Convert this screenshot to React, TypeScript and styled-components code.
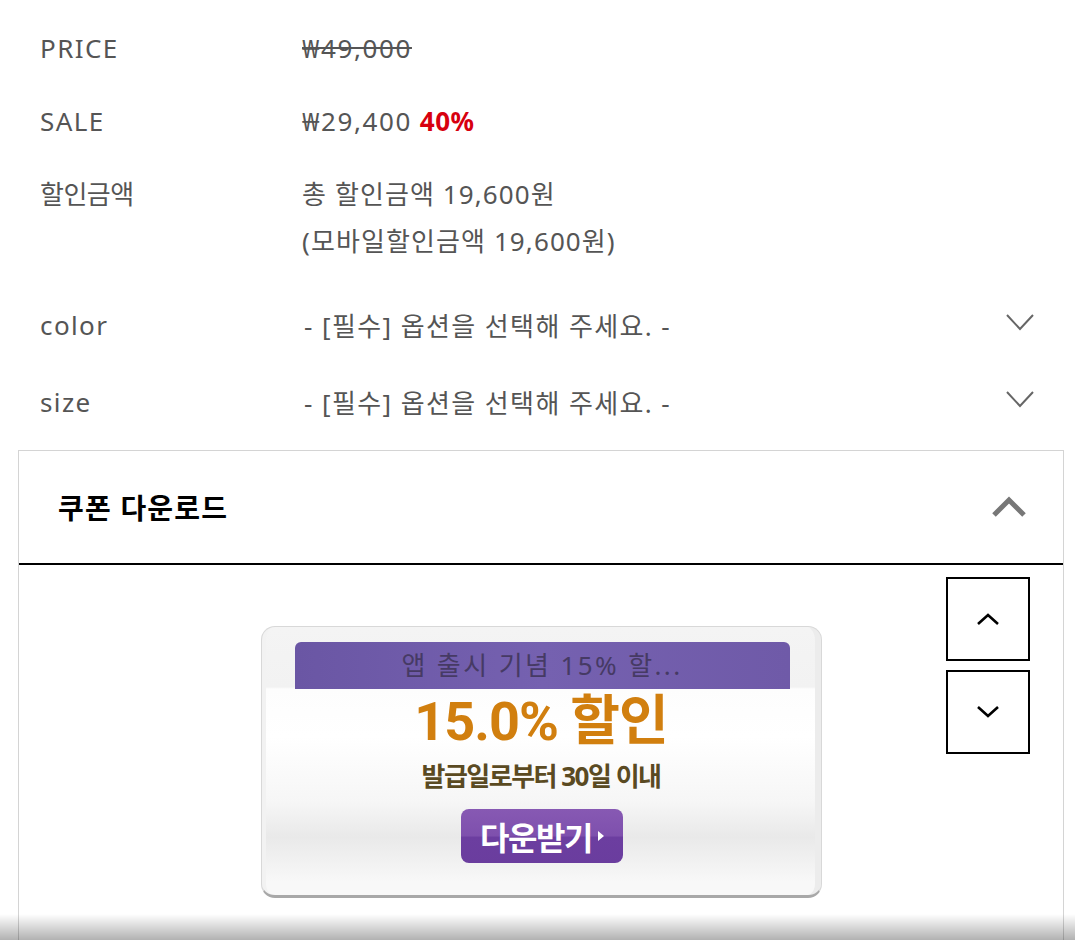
import React from "react";
import styled, { createGlobalStyle } from "styled-components";

const Global = createGlobalStyle`
  html, body { margin: 0; padding: 0; background: #fff; }
  body { font-family: "Noto Sans", "Noto Sans CJK KR", sans-serif; color: #555; }
  * { box-sizing: border-box; }
`;

const Page = styled.div`
  width: 1075px;
  padding-top: 12px;
`;

const InfoList = styled.div`
  display: flex;
  flex-direction: column;
  padding: 0 40px;
`;

const InfoRow = styled.div`
  display: grid;
  grid-template-columns: 262px 1fr;
  padding: 13px 0;
  line-height: 47px;
  font-size: 26px;
  letter-spacing: 1.1px;
`;

const Label = styled.div<{ $hangul?: boolean }>`
  letter-spacing: ${(p) => (p.$hangul ? "-0.5px" : "1.4px")};
  color: #555;
`;

const Value = styled.div`
  color: #555;
`;

const Price = styled.span`
  letter-spacing: 1.6px;
`;

const Strike = styled(Price)`
  text-decoration: line-through;
`;

const Rate = styled.span`
  color: #d7000f;
  font-weight: 700;
  letter-spacing: 0.5px;
`;

const OptionList = styled.div`
  display: flex;
  flex-direction: column;
  padding: 8px 40px 0 40px;
`;

const OptionRow = styled.div`
  display: grid;
  grid-template-columns: 264px 1fr 30px;
  align-items: center;
  height: 77px;
  font-size: 26px;
  color: #555;
`;

const OptionLabel = styled.div`
  letter-spacing: 1.4px;
`;

const OptionText = styled.div`
  letter-spacing: 1.4px;
`;

const Chevron = styled.svg`
  display: block;
  justify-self: end;
  margin-right: 0px;
  margin-top: -4px;
`;

const CouponBox = styled.section`
  margin: 10px 11px 0 18px;
  border: 1px solid #d4d4d4;
  border-bottom: none;
`;

const CouponHeader = styled.div`
  height: 114px;
  display: flex;
  align-items: center;
  justify-content: space-between;
  padding: 0 36px 0 39px;
  border-bottom: 2px solid #000;
`;

const CouponTitle = styled.h2`
  margin: 0;
  font-size: 28px;
  font-weight: 700;
  color: #000;
  letter-spacing: 1.2px;
`;

const CouponBody = styled.div`
  padding: 12px 33px 120px 0;
  position: relative;
`;

const SliderControls = styled.div`
  position: absolute;
  top: 12px;
  right: 33px;
  display: flex;
  flex-direction: column;
  gap: 9px;
`;

const SlideButton = styled.button`
  width: 84px;
  height: 84px;
  border: 2px solid #000;
  background: #fff;
  display: flex;
  align-items: center;
  justify-content: center;
  padding: 0;
`;

const CardWrap = styled.div`
  display: flex;
  justify-content: center;
  padding-top: 49px;
  padding-left: 33px;
`;

const Card = styled.div`
  width: 561px;
  height: 272px;
  border-radius: 14px;
  border: 1px solid #d8d8d8;
  border-bottom: 3px solid #a8a8a8;
  background: linear-gradient(#f4f4f4 0px, #f2f2f2 60px, #fdfdfd 62px, #ffffff 110px, #f6f6f6 175px, #e9e9e9 210px, #f8f8f8 255px);
  box-shadow: inset -10px 0 0 -4px #ececec, inset 8px 0 0 -4px #f2f2f2;
  display: flex;
  flex-direction: column;
  align-items: center;
  padding-top: 15px;
`;

const Band = styled.div`
  width: 495px;
  margin-left: 2px;
  height: 47px;
  border-radius: 6px 6px 0 0;
  background: linear-gradient(90deg, #6a56a4, #7561b0 50%, #6f5aa8);
  color: #463a64;
  font-size: 26px;
  line-height: 47px;
  text-align: center;
  letter-spacing: 2.4px;
`;

const Percent = styled.div`
  margin-top: 1px;
  font-family: Roboto, "Noto Sans CJK KR", sans-serif;
  font-size: 54px;
  font-weight: 700;
  color: #d17f0f;
  line-height: 64px;
  letter-spacing: -1px;
`;

const Period = styled.div`
  margin-top: 5px;
  font-size: 26px;
  font-weight: 700;
  color: #5a4a22;
  letter-spacing: -1.5px;
  line-height: 34px;
`;

const DownloadButton = styled.div`
  margin-top: 16px;
  width: 162px;
  height: 54px;
  border-radius: 8px;
  background: linear-gradient(#8759b3 0%, #7e50ad 50%, #6c3ea0 52%, #6a3d9e 100%);
  display: flex;
  align-items: center;
  justify-content: center;
  gap: 6px;
  color: #fff;
  font-size: 32px;
  font-weight: 700;
  letter-spacing: -1.5px;
  margin-left: 2px;
`;

const Triangle = styled.span`
  width: 0;
  height: 0;
  border-top: 5px solid transparent;
  border-bottom: 5px solid transparent;
  border-left: 6px solid #fff;
`;

const BottomShade = styled.div`
  position: fixed;
  left: 0;
  right: 0;
  bottom: 0;
  height: 26px;
  background: linear-gradient(rgba(0,0,0,0), rgba(0,0,0,0.3));
  pointer-events: none;
`;

const DownChevron = () => (
  <Chevron width="30" height="20" viewBox="0 0 30 20">
    <polyline points="2,2 15,16 28,2" fill="none" stroke="#666" strokeWidth="2" />
  </Chevron>
);

export default function App() {
  return (
    <>
      <Global />
      <Page>
        <InfoList>
          <InfoRow>
            <Label>PRICE</Label>
            <Value><Strike>₩49,000</Strike></Value>
          </InfoRow>
          <InfoRow>
            <Label>SALE</Label>
            <Value><Price>₩29,400</Price> <Rate>40%</Rate></Value>
          </InfoRow>
          <InfoRow>
            <Label $hangul>할인금액</Label>
            <Value>
              총 할인금액 19,600원
              <br />
              (모바일할인금액 19,600원)
            </Value>
          </InfoRow>
        </InfoList>
        <OptionList>
          <OptionRow>
            <OptionLabel>color</OptionLabel>
            <OptionText>- [필수] 옵션을 선택해 주세요. -</OptionText>
            <DownChevron />
          </OptionRow>
          <OptionRow>
            <OptionLabel>size</OptionLabel>
            <OptionText>- [필수] 옵션을 선택해 주세요. -</OptionText>
            <DownChevron />
          </OptionRow>
        </OptionList>
        <CouponBox>
          <CouponHeader>
            <CouponTitle>쿠폰 다운로드</CouponTitle>
            <svg width="36" height="24" viewBox="0 0 36 24">
              <polyline points="3,20 18,5 33,20" fill="none" stroke="#777" strokeWidth="5" />
            </svg>
          </CouponHeader>
          <CouponBody>
            <SliderControls>
              <SlideButton aria-label="이전">
                <svg width="26" height="16" viewBox="0 0 26 16">
                  <polyline points="3,13 13,4 23,13" fill="none" stroke="#000" strokeWidth="2.6" />
                </svg>
              </SlideButton>
              <SlideButton aria-label="다음">
                <svg width="26" height="16" viewBox="0 0 26 16">
                  <polyline points="3,3 13,12 23,3" fill="none" stroke="#000" strokeWidth="2.6" />
                </svg>
              </SlideButton>
            </SliderControls>
            <CardWrap>
              <Card>
                <Band>앱 출시 기념 15% 할...</Band>
                <Percent>15.0% 할인</Percent>
                <Period>발급일로부터 30일 이내</Period>
                <DownloadButton>
                  다운받기
                  <Triangle />
                </DownloadButton>
              </Card>
            </CardWrap>
          </CouponBody>
        </CouponBox>
      </Page>
      <BottomShade />
    </>
  );
}
